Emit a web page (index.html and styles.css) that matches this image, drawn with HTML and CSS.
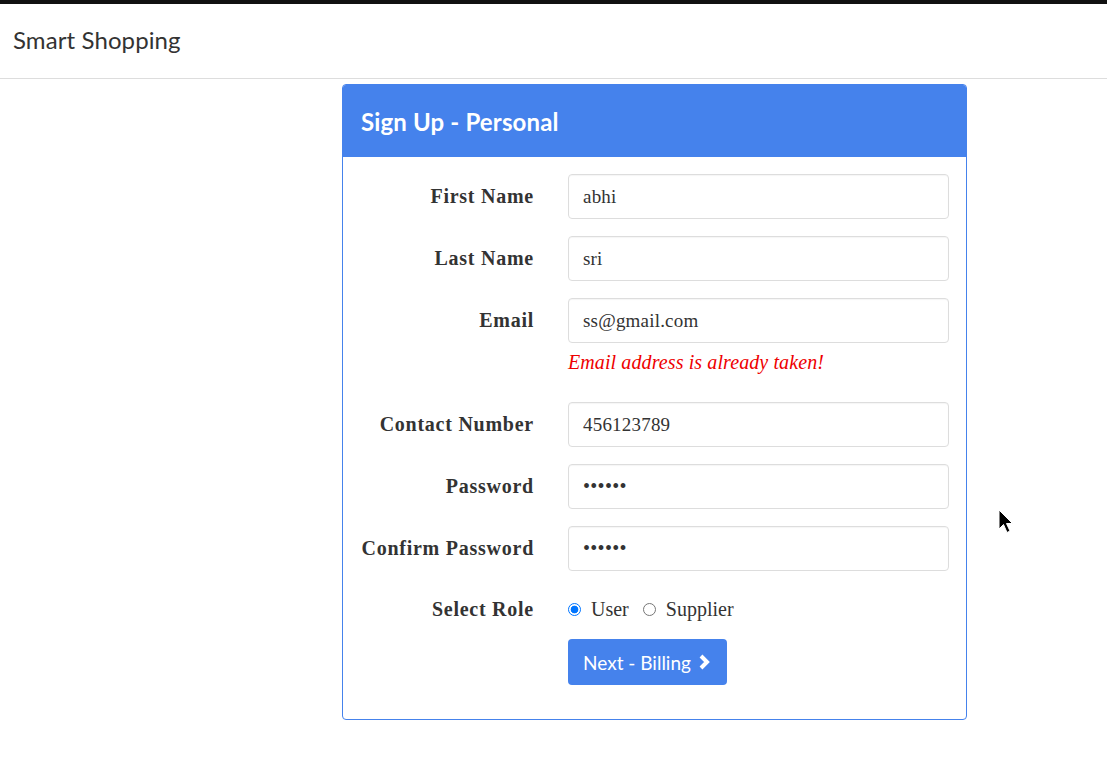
FILE: index.html
```html
<!DOCTYPE html>
<html>
<head>
<meta charset="utf-8">
<link rel="stylesheet" href="styles.css">
</head>
<body>
<div class="topbar"></div>
<nav class="navbar"><span class="brand">Smart Shopping</span></nav>
<main class="page">
  <section class="card">
    <header class="card-head">Sign Up - Personal</header>
    <form class="card-body">
      <label class="lbl">First Name</label>
      <div class="field"><div class="input">abhi</div></div>
      <label class="lbl">Last Name</label>
      <div class="field"><div class="input">sri</div></div>
      <label class="lbl">Email</label>
      <div class="field"><div class="input">ss@gmail.com</div><div class="error">Email address is already taken!</div></div>
      <label class="lbl">Contact Number</label>
      <div class="field"><div class="input">456123789</div></div>
      <label class="lbl">Password</label>
      <div class="field"><div class="input dots">••••••</div></div>
      <label class="lbl">Confirm Password</label>
      <div class="field"><div class="input dots">••••••</div></div>
      <label class="lbl role">Select Role</label>
      <div class="field radios">
        <span class="radio on"></span><span class="rtext">User</span>
        <span class="radio"></span><span class="rtext">Supplier</span>
      </div>
      <div></div>
      <div class="field"><button type="button" class="btn">Next - Billing <svg width="15" height="16" viewBox="0 0 15 16"><path d="M4 2 L10 8 L4 14" fill="none" stroke="#fff" stroke-width="4" stroke-linejoin="miter"/></svg></button></div>
    </form>
  </section>
</main>
<svg class="cursor" width="18" height="26" viewBox="0 0 18 26"><path d="M1 1 L1 20 L5.5 15.5 L9 23.5 L12 22 L8.5 14.5 L14.5 14.5 Z" fill="#000" stroke="#fff" stroke-width="1"/></svg>
</body>
</html>
```
FILE: styles.css
```css
html, body { margin: 0; padding: 0; background: #fff; }
body { font-family: "Liberation Serif", "DejaVu Serif", serif; color: #333; position: relative; min-height: 764px; }
.topbar { height: 4px; background: #111; }
.navbar { border-bottom: 1px solid #ddd; display: flex; align-items: center; padding-left: 13px; box-sizing: border-box; height: 75px; }
.brand { font-family: "Lato", "Open Sans", sans-serif; font-size: 24px; color: #333; font-weight: 400; letter-spacing: 0.1px; position: relative; top: -2px; }
.page { padding-top: 5px; padding-left: 342px; }
.card { width: 625px; box-sizing: border-box; border: 1px solid #4582ec; border-radius: 4px; overflow: hidden; }
.card-head { background: #4582ec; color: #fff; height: 72px; display: flex; align-items: center; padding-left: 18px; font-family: "Lato", "Open Sans", sans-serif; font-weight: 700; font-size: 24px; letter-spacing: 0.15px; }
.card-body { display: grid; grid-template-columns: 174px 381px; column-gap: 34px; row-gap: 17px; padding: 17px 17px 34px 17px; }
.lbl { text-align: right; font-weight: 700; font-size: 20px; letter-spacing: 0.75px; line-height: 45px; color: #333; }
.lbl.role { line-height: 24px; margin-top: 9px; }
.input { height: 45px; box-sizing: border-box; border: 1px solid #ddd; border-radius: 4px; padding: 0 14px; font-size: 19px; letter-spacing: 0.2px; line-height: 43px; color: #333; box-shadow: inset 0 1px 1px rgba(0,0,0,0.04); }
.input.dots { font-size: 20px; letter-spacing: 0.3px; }
.error { color: #e00; font-style: italic; font-size: 20px; letter-spacing: 0.1px; line-height: 22px; margin-top: 8px; margin-bottom: 12px; }
.radios { display: flex; align-items: center; height: 24px; margin-top: 9px; }
.radio { width: 13px; height: 13px; border: 1px solid #767676; border-radius: 50%; box-sizing: border-box; margin-right: 10px; }
.radio.on { border: 1px solid #0075ff; background: radial-gradient(circle, #0075ff 3.5px, #fff 4.2px); }
.rtext { font-size: 20px; margin-right: 14px; }
.btn { margin-top: 1px; height: 46px; width: 159px; background: #4582ec; color: #fff; border: none; border-radius: 4px; font-family: "Lato", "Open Sans", sans-serif; font-size: 19px; display: flex; align-items: center; justify-content: center; gap: 6px; padding: 0; }
.cursor { position: absolute; left: 998px; top: 509px; }
```
